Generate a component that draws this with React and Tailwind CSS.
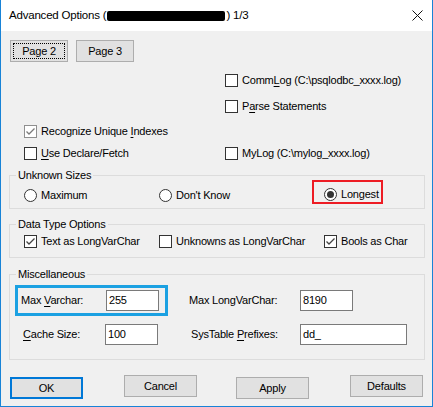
import React from "react";

const font = { fontFamily: '"Liberation Sans", Arial, sans-serif' };

const U = ({ children }) => <span className="underline underline-offset-[2px]">{children}</span>;

const Check = ({ checked, dim, label, className = "" }) => (
  <div className={`flex items-center h-[13px] ${className}`}>
    <span
      className={`w-[13px] h-[13px] bg-white border flex items-center justify-center shrink-0 ${
        dim ? "border-[#8f8f8f]" : "border-[#333333]"
      }`}
    >
      {checked && (
        <svg width="11" height="11" viewBox="0 0 11 11">
          <polyline
            points="1.5,5.5 4,8 9.5,2.5"
            fill="none"
            stroke={dim ? "#7a7a7a" : "#444444"}
            strokeWidth="1.3"
          />
        </svg>
      )}
    </span>
    <span className="ml-[4px] whitespace-nowrap">{label}</span>
  </div>
);

const Radio = ({ checked, label, className = "" }) => (
  <div className={`flex items-center h-[13px] ${className}`}>
    <span className="w-[13px] h-[13px] rounded-full bg-white border border-[#333333] flex items-center justify-center shrink-0">
      {checked && <span className="w-[7px] h-[7px] rounded-full bg-[#333333]" />}
    </span>
    <span className="ml-[4px] whitespace-nowrap">{label}</span>
  </div>
);

const Btn = ({ children, className = "", focus }) => (
  <button
    className={`relative h-[22px] bg-[#e1e1e1] border flex items-center justify-center ${
      focus ? "border-2 border-[#0078d7]" : "border-[#adadad]"
    } ${className}`}
  >
    {children}
  </button>
);

const Group = ({ title, children, className = "" }) => (
  <fieldset className={`ml-[8px] w-[416px] border border-[#dcdcdc] ${className}`}>
    <legend className="ml-[6px] px-[2px] leading-[14px]">{title}</legend>
    {children}
  </fieldset>
);

const Input = ({ value, className = "" }) => (
  <div className={`h-[21px] bg-white border border-[#7a7a7a] pl-[2px] flex items-center ${className}`}>
    {value}
  </div>
);

export default function App() {
  return (
    <div
      className="w-[433px] h-[407px] flex flex-col border-x border-b border-[#1883d7] bg-white text-black text-[11px] tracking-[-0.2px]"
      style={font}
    >
      <div className="h-[31px] shrink-0 flex items-center pl-[8px] relative text-[11.5px]">
        <span>Advanced Options (</span>
        <span className="w-[118px] h-[10px] bg-black rounded-[2px] mx-[1px]" />
        <span>) 1/3</span>
        <svg className="absolute left-[411px] top-[10px]" width="11" height="11" viewBox="0 0 11 11">
          <path d="M0.5 0.5 L10.5 10.5 M10.5 0.5 L0.5 10.5" stroke="#111" strokeWidth="1" />
        </svg>
      </div>

      <div className="flex-1 bg-[#f0f0f0] flex flex-col">
        <div className="flex pl-[9px] mt-[9px] gap-[8px]">
          <Btn className="w-[58px]">
            <span className="absolute inset-[2px] border border-dotted border-black" />
            Page 2
          </Btn>
          <Btn className="w-[58px]">Page 3</Btn>
        </div>

        <div className="pl-[23px]">
          <div className="flex mt-[12px]">
            <div className="w-[201px]" />
            <Check label={<>Comm<U>L</U>og (C:\psqlodbc_xxxx.log)</>} />
          </div>
          <div className="flex mt-[13px]">
            <div className="w-[201px]" />
            <Check label={<>P<U>a</U>rse Statements</>} />
          </div>
          <div className="flex mt-[12px]">
            <Check checked dim label={<>Recognize Unique <U>I</U>ndexes</>} />
          </div>
          <div className="flex mt-[9px]">
            <Check className="w-[201px]" label={<><U>U</U>se Declare/Fetch</>} />
            <Check label="MyLog (C:\mylog_xxxx.log)" />
          </div>
        </div>

        <Group title="Unknown Sizes" className="mt-[8px]">
          <div className="flex pl-[14px] pt-[7px] pb-[6px]">
            <Radio className="w-[135px]" label="Maximum" />
            <Radio className="w-[165px]" label="Don't Know" />
            <div className="relative">
              <Radio checked label="Longest" className="-mt-[1px]" />
              <span className="absolute -left-[12px] -top-[9px] w-[71px] h-[24px] border-2 border-[#ed1c24]" />
            </div>
          </div>
        </Group>

        <Group title="Data Type Options" className="mt-[8px]">
          <div className="flex pl-[14px] pt-[4px] pb-[9px]">
            <Check checked className="w-[135px]" label="Text as LongVarChar" />
            <Check className="w-[165px]" label="Unknowns as LongVarChar" />
            <Check checked label="Bools as Char" />
          </div>
        </Group>

        <Group title="Miscellaneous" className="mt-[9px]">
          <div className="pt-[4px] pb-[14px]">
            <div className="flex items-center pl-[5px]">
              <div className="w-[153px] h-[31px] border-[3px] border-[#1ba1e2] flex items-center pl-[3px]">
                <span className="w-[85px]">Max <U>V</U>archar:</span>
                <Input className="w-[53px]" value="255" />
              </div>
              <span className="ml-[21px] w-[111px]">Max LongVarChar:</span>
              <Input className="w-[53px]" value="8190" />
            </div>
            <div className="flex items-center pl-[13px] mt-[8px]">
              <span className="w-[82px]"><U>C</U>ache Size:</span>
              <Input className="w-[53px]" value="100" />
              <span className="ml-[33px] w-[109px]">SysTable <U>P</U>refixes:</span>
              <Input className="w-[107px]" value="dd_" />
            </div>
          </div>
        </Group>

        <div className="flex items-start pl-[9px] mt-[15px]">
          <Btn focus className="w-[73px] mt-[2px]">OK</Btn>
          <Btn className="w-[73px] ml-[41px]">Cancel</Btn>
          <Btn className="w-[73px] ml-[39px] mt-[2px]">Apply</Btn>
          <Btn className="w-[73px] ml-[41px]">Defaults</Btn>
        </div>
      </div>
    </div>
  );
}
